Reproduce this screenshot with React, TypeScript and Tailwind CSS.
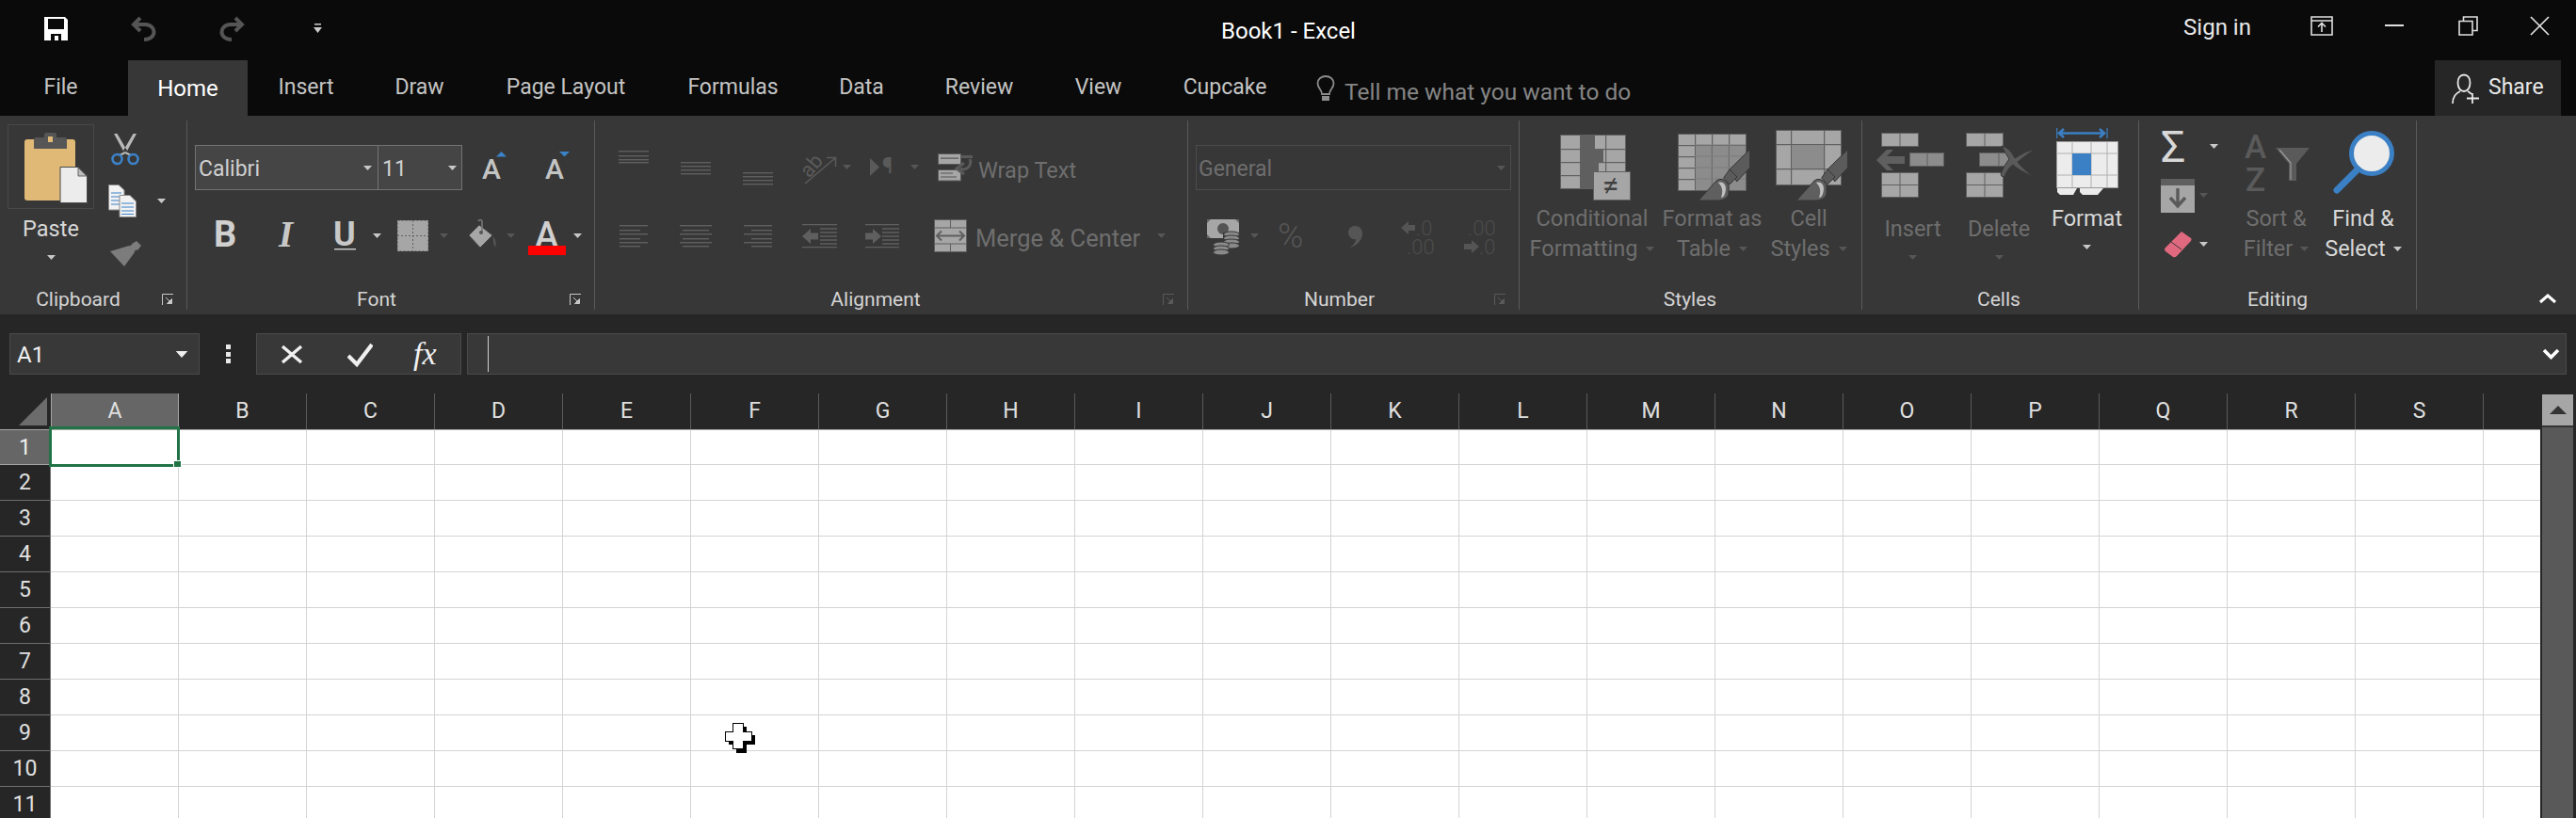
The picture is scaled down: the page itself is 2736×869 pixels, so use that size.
import React from "react";

const D = "#5f5f5f";
const G = "#a6a6a6";

function Caret({ c = "#c8c8c8", className = "" }: { c?: string; className?: string }) {
  return (
    <svg width="9" height="5" viewBox="0 0 9 5" className={"shrink-0 " + className}>
      <path d="M0 0H9L4.5 5Z" fill={c} />
    </svg>
  );
}
const DIM = "#565656";

function Launcher({ c = "#c8c8c8", className = "" }: { c?: string; className?: string }) {
  return (
    <svg width="13" height="13" viewBox="0 0 13 13" className={"shrink-0 " + className}>
      <path d="M.5 12V.5H12" fill="none" stroke={c} />
      <path d="M4 4L9 9M10.5 5.5V10.5H5.5Z" fill={c} stroke={c} />
    </svg>
  );
}

function GroupLabel({ w, text, launcher }: { w: string; text: string; launcher?: React.ReactNode }) {
  return (
    <div className="flex h-[22px] items-center text-[21px] leading-[22px] text-[#d4d4d4]">
      <div className={w + " text-center whitespace-nowrap"}>{text}</div>
      {launcher}
    </div>
  );
}

function Stripes({ w, ys, xs }: { w: number; ys: number[]; xs?: [number, number][] }) {
  const h = Math.max(...ys) + 2;
  return (
    <svg width={w} height={h} className="shrink-0">
      {ys.map((y, i) => (
        <rect key={i} x={xs ? xs[i][0] : 0} y={y} width={xs ? xs[i][1] - xs[i][0] : w} height="1.4" fill={D} />
      ))}
    </svg>
  );
}

function Brush({ x, y }: { x: number; y: number }) {
  return (
    <g transform={`translate(${x} ${y})`}>
      <path d="M76.7 16.7V36L62.7 51 55.3 37.7Z" fill="#5b5b5b" stroke="#363636" />
      <path d="M55 38L63 46 55 54 48.7 47Z" fill="#5b5b5b" stroke="#363636" />
      <path d="M22 71L41 50C46 46 53 50 54 56V64C53 69 47 71 42 71Z" fill="#5f5f5f" stroke="#363636" />
      <path d="M43 52C49 50 53 56 50 64 49 67 47 68 46 68 48 62 48 57 43 52Z" fill="#c0c0c0" />
    </g>
  );
}

function ABlue({ dir }: { dir: "up" | "down" }) {
  return (
    <svg width="25" height="30" viewBox="0 0 25 30" className="shrink-0 overflow-visible">
      <text x="-1" y="29" fontFamily="Roboto, sans-serif" fontSize="30" fontWeight="500" fill="#c4c4c4">A</text>
      {dir === "up" ? <path d="M14 5.5L19.5 0 25 5.5Z" fill="#3b82c8" /> : <path d="M14 0H25L19.5 5.5Z" fill="#3b82c8" />}
    </svg>
  );
}

function WinGrid({ rows, cols, w, h, fill }: { rows: number[]; cols: number[]; w: number; h: number; fill: string }) {
  return (
    <g>
      <rect x=".5" y=".5" width={w} height={h} fill={fill} stroke="#606060" />
      {rows.map((y) => (
        <rect key={"r" + y} x="0" y={y} width={w} height="1.2" fill="#606060" />
      ))}
      {cols.map((x) => (
        <rect key={"c" + x} x={x} y="0" width="1.2" height={h} fill="#606060" />
      ))}
    </g>
  );
}

const colNames = "ABCDEFGHIJKLMNOPQRS".split("");
const rows = [1, 2, 3, 4, 5, 6, 7, 8, 9, 10, 11];
const tabs: [string, string][] = [
  ["Insert", "w-[124px]"],
  ["Draw", "w-[117px]"],
  ["Page Layout", "w-[194px]"],
  ["Formulas", "w-[161px]"],
  ["Data", "w-[112px]"],
  ["Review", "w-[138px]"],
  ["View", "w-[115px]"],
  ["Cupcake", "w-[154px]"],
];

export default function App() {
  return (
    <div className="relative h-[869px] w-[2736px] overflow-hidden bg-[#262626] [font-family:Roboto,sans-serif]">
      {/* Title bar */}
      <div className="flex h-[64px] items-start bg-[#0a0a0a]">
        <svg width="25" height="25" viewBox="0 0 25 25" className="ml-[47px] mt-[18px] shrink-0">
          <path fillRule="evenodd" fill="#fff" d="M0 0H22L25 3V25H0Z M4 2V13H21V2Z M7 18V25H11V20H15V25H18V18Z" />
        </svg>
        <svg width="27" height="27" viewBox="0 0 27 27" className="ml-[67px] mt-[17px] shrink-0">
          <path d="M10 2L3 9L10 16M3 9H15C21 9 24.5 13 24.5 17S21 25 14 25" fill="none" stroke="#555" strokeWidth="4" />
        </svg>
        <svg width="27" height="27" viewBox="0 0 27 27" className="ml-[67px] mt-[17px] shrink-0">
          <path d="M17 2L24 9L17 16M24 9H12C6 9 2.5 13 2.5 17S6 25 13 25" fill="none" stroke="#555" strokeWidth="4" />
        </svg>
        <svg width="9" height="10" viewBox="0 0 9 10" className="ml-[73px] mt-[25px] shrink-0">
          <rect x="1" width="7" height="1.5" fill="#ccc" />
          <path d="M0 4H9L4.5 10Z" fill="#ccc" />
        </svg>
        <div className="ml-[955px] mt-[18px] w-[142px] whitespace-nowrap text-center text-[24px] leading-[30px] text-white">Book1 - Excel</div>
        <div className="ml-auto mt-[14px] w-[74px] whitespace-nowrap text-center text-[24px] leading-[30px] text-[#e8e8e8]">Sign in</div>
        <svg width="24" height="21" viewBox="0 0 24 21" className="ml-[62px] mt-[17px] shrink-0">
          <path d="M1 1H23V20H1ZM1 5H23M12 17V8M8 11.5L12 7.5 16 11.5" fill="none" stroke="#e0e0e0" strokeWidth="1.6" />
        </svg>
        <div className="ml-[55px] mt-[26px] h-[2px] w-[20px] bg-[#e0e0e0]" />
        <svg width="21" height="21" viewBox="0 0 21 21" className="ml-[58px] mt-[17px] shrink-0">
          <path d="M1 5.5H15V20H1ZM5.5 5V1H20V15.5H15.5" fill="none" stroke="#e0e0e0" strokeWidth="1.6" />
        </svg>
        <svg width="21" height="21" viewBox="0 0 21 21" className="ml-[55px] mr-[28px] mt-[17px] shrink-0">
          <path d="M1 1L20 20M20 1L1 20" fill="none" stroke="#e8e8e8" strokeWidth="1.6" />
        </svg>
      </div>

      {/* Tabs */}
      <div className="flex h-[59px] bg-[#0a0a0a] text-[23px] text-[#c4c4c4]">
        <div className="ml-[15px] mr-[22px] flex w-[99px] items-center justify-center">File</div>
        <div className="flex w-[127px] items-center justify-center bg-[#373737] text-[24px] text-white">Home</div>
        {tabs.map(([t, w]) => (
          <div key={t} className={w + " flex items-center justify-center whitespace-nowrap"}>{t}</div>
        ))}
        <svg width="20" height="28" viewBox="0 0 20 28" className="ml-[20px] mt-[16px] shrink-0">
          <path d="M6 20C6 15 1.5 14 1.5 8.5 1.5 4 5.5 1 10 1S18.5 4 18.5 8.5C18.5 14 14 15 14 20Z" fill="none" stroke="#8c8c8c" strokeWidth="1.8" />
          <rect x="6" y="22" width="8" height="5" fill="#8c8c8c" />
        </svg>
        <div className="ml-[10px] mt-[19px] h-[30px] w-[305px] whitespace-nowrap text-[24.5px] leading-[30px] text-[#858585]">Tell me what you want to do</div>
        <div className="ml-[853px] flex h-[59px] w-[134px] items-center bg-[#262626] text-[#e8e8e8]">
          <svg width="30" height="32" viewBox="0 0 30 32" className="ml-[18px] shrink-0">
            <path d="M13 19C9 19 6.5 15 6.5 10S9 1.5 13 1.5 19.5 5 19.5 10 17 19 13 19ZM1 32C1 25 4 21 9 19M17 19C19 20 20 21 21 22M22 21V32M16 26.5H29" fill="none" stroke="#e8e8e8" strokeWidth="1.8" />
          </svg>
          <span className="ml-[9px]">Share</span>
        </div>
      </div>

      {/* Ribbon */}
      <div className="flex h-[211px] bg-[#373737] py-[5px] text-[23.5px] leading-[32px] text-[#d8d8d8]">
        {/* Clipboard */}
        <div className="flex w-[199px] shrink-0 flex-col border-r border-[#5a5a5a]">
          <div className="flex h-[179px]">
            <div className="ml-[8px] flex w-[92px] flex-col items-center">
              <div className="mt-[4px] h-[90px] w-[92px] border border-[#484848]">
                <svg width="68" height="76" viewBox="0 0 68 76" className="ml-[17px] mt-[8px]">
                  <rect x="0" y="7" width="54" height="65" rx="3" fill="#dfb975" />
                  <path d="M10 17V7Q10 5 12 5H21V2Q21 0 23 0H32Q34 0 34 2V5H43Q45 5 45 7V17Z" fill="#565656" />
                  <rect x="25" y="4" width="5" height="6" fill="#dfb975" />
                  <path d="M38 36.5H57L66.5 46V74.5H38Z" fill="#ececec" stroke="#4a4a4a" />
                  <path d="M57 37V46H66Z" fill="#bdbdbd" stroke="#4a4a4a" strokeWidth=".8" />
                </svg>
              </div>
              <div className="mt-[5px]">Paste</div>
              <Caret className="mt-[12px]" />
            </div>
            <div className="flex flex-col">
              <svg width="30" height="34" viewBox="0 0 30 34" className="ml-[18px] mt-[14px]">
                <path d="M3 0L6.5 0 17 18 15 22ZM27 0L23.5 0 13 18 15 22Z" fill="#b8b8b8" />
                <path d="M15 20L9 23M15 20L21 23" stroke="#b8b8b8" strokeWidth="2" />
                <circle cx="6.5" cy="27" r="5" fill="none" stroke="#3b82c8" strokeWidth="2.6" />
                <circle cx="23.5" cy="27" r="5" fill="none" stroke="#3b82c8" strokeWidth="2.6" />
              </svg>
              <div className="ml-[15px] mt-[20px] flex">
                <svg width="30" height="35" viewBox="0 0 30 35" className="shrink-0">
                  <path d="M.5.5H11L17 6V27H.5Z" fill="#f2f2f2" stroke="#8a8a8a" />
                  <path d="M3 9H14M3 13H14M3 17H14M3 21H14" stroke="#3b82c8" strokeWidth="1.2" />
                  <path d="M12 11.5H23L29.5 18V34.5H12Z" fill="#f2f2f2" stroke="#8a8a8a" />
                  <path d="M14 20H27M14 24H27M14 28H27M14 31.5H27" stroke="#3b82c8" strokeWidth="1.2" />
                </svg>
                <Caret className="ml-[22px] mt-[15px]" />
              </div>
              <svg width="33" height="28" viewBox="0 0 33 28" className="ml-[17px] mt-[25px]">
                <path d="M23 3L28 0 33 5 29 10 26 8ZM0 11L20 5 26 12 15 27Z" fill="#7c7c7c" />
                <path d="M20 6L24 3 29 8 25 12Z" fill="#7c7c7c" />
              </svg>
            </div>
          </div>
          <GroupLabel w="w-[166px]" text="Clipboard" launcher={<Launcher className="ml-[6px]" />} />
        </div>

        {/* Font */}
        <div className="flex w-[433px] shrink-0 flex-col border-r border-[#5a5a5a]">
          <div className="h-[179px] pt-[26px]">
            <div className="flex h-[48px]">
              <div className="ml-[8px] flex h-[48px] w-[195px] items-center justify-between border border-[#737373] bg-[#454545] pl-[3px] pr-[6px] text-[#d0d0d0]">
                <span className="pt-[3px] text-[23px]">Calibri</span>
                <Caret />
              </div>
              <div className="flex h-[48px] w-[89px] items-center justify-between border border-l-0 border-[#737373] bg-[#454545] pl-[4px] pr-[5px] text-[#d0d0d0]">
                <span className="pt-[3px] text-[23px]">11</span>
                <Caret />
              </div>
              <div className="ml-[22px] mt-[7px]"><ABlue dir="up" /></div>
              <div className="ml-[42px] mt-[7px]"><ABlue dir="down" /></div>
            </div>
            <div className="mt-[31px] flex h-[38px] items-start text-[#c8c8c8]">
              <svg width="24" height="30" viewBox="0 0 24 30" className="ml-[28px] mt-[1px] shrink-0 overflow-visible">
                <text x="0" y="28" fontFamily="Roboto, sans-serif" fontSize="38" fontWeight="700" fill="#d0d0d0">B</text>
              </svg>
              <svg width="22" height="30" viewBox="0 0 22 30" className="ml-[44px] mt-[1px] shrink-0 overflow-visible">
                <text x="1" y="28" fontFamily="Liberation Serif, serif" fontSize="39" fontStyle="italic" fontWeight="700" fill="#c8c8c8">I</text>
              </svg>
              <svg width="24" height="31" viewBox="0 0 24 31" className="ml-[38px] mt-[2px] shrink-0 overflow-visible">
                <text x="-1" y="26" fontFamily="Roboto, sans-serif" fontSize="36" fontWeight="700" fill="#c8c8c8">U</text>
                <rect x="0" y="29" width="23" height="1.4" fill="#d0d0d0" />
              </svg>
              <Caret className="ml-[17px] mt-[15px]" />
              <svg width="33" height="33" viewBox="0 0 33 33" className="ml-[17px] mt-[1px] shrink-0">
                <rect width="33" height="33" fill={G} />
                <path d="M16.5 0V33M0 16.5H33" stroke="#5f5f5f" strokeWidth="1" strokeDasharray="2 2" />
                <path d="M.5.5H32.5V32.5H.5Z" fill="none" stroke="#7a7a7a" strokeDasharray="2 2" />
              </svg>
              <Caret c={DIM} className="ml-[12px] mt-[15px]" />
              <svg width="31" height="31" viewBox="0 0 31 31" className="ml-[21px] shrink-0">
                <path d="M12 6L26 17 13 30 1 17Z" fill={G} stroke="#4a4a4a" />
                <path d="M11 2Q13-1 15 2V13" fill="none" stroke="#777" strokeWidth="1.6" />
                <circle cx="14" cy="14" r="2" fill="#555" />
                <path d="M27 18Q31 24 29 30 26 25 27 18Z" fill="#555" />
              </svg>
              <Caret c={DIM} className="ml-[10px] mt-[15px]" />
              <svg width="40" height="38" viewBox="0 0 40 38" className="ml-[14px] mt-[2px] shrink-0 overflow-visible">
                <text x="7" y="28" fontFamily="Roboto, sans-serif" fontSize="38" fontWeight="500" fill="#d0d0d0">A</text>
                <rect y="26" width="40" height="10" fill="#ff0000" />
              </svg>
              <Caret className="ml-[8px] mt-[15px]" />
            </div>
          </div>
          <GroupLabel w="w-[402px]" text="Font" launcher={<Launcher className="ml-[4px]" />} />
        </div>

        {/* Alignment */}
        <div className="flex w-[630px] shrink-0 flex-col border-r border-[#5a5a5a] text-[#6e6e6e]">
          <div className="h-[179px] pt-[32px]">
            <div className="flex h-[40px] items-start">
              <div className="ml-[25px]"><Stripes w={32} ys={[0, 5, 9, 12]} /></div>
              <div className="ml-[34px] mt-[12px]"><Stripes w={32} ys={[0, 4, 8, 12]} /></div>
              <div className="ml-[34px] mt-[23px]"><Stripes w={32} ys={[0, 4, 8, 12]} /></div>
              <svg width="38" height="34" viewBox="0 0 38 34" className="ml-[31px] mt-[2px] shrink-0 overflow-visible">
                <text x="0" y="24" transform="rotate(-50 8 18)" fontFamily="Roboto, sans-serif" fontSize="22" fill="#5a5a5a">ab</text>
                <path d="M3 33L35 6M26 5.5H35.5V15" fill="none" stroke="#5a5a5a" strokeWidth="1.6" />
              </svg>
              <Caret c={DIM} className="ml-[5px] mt-[15px]" />
              <svg width="30" height="21" viewBox="0 0 30 21" className="ml-[20px] mt-[7px] shrink-0 overflow-visible">
                <path d="M0 1L10 10.5 0 20Z" fill="#5a5a5a" />
                <text x="13" y="17" fontFamily="Roboto, sans-serif" fontSize="23" fill="#5a5a5a">¶</text>
              </svg>
              <Caret c={DIM} className="ml-[13px] mt-[15px]" />
              <svg width="38" height="30" viewBox="0 0 38 30" className="ml-[20px] mt-[3px] shrink-0">
                <rect x=".5" y=".5" width="24" height="11" fill={G} stroke="#5a5a5a" />
                <rect x="3" y="4.5" width="19" height="1.2" fill="#555" />
                <rect x=".5" y="17.5" width="24" height="11.5" fill={G} stroke="#5a5a5a" />
                <path d="M3 21H16M3 25H20" stroke="#555" strokeWidth="1.2" />
                <path d="M24 3.5H37M34 6C37 13 30 19 24 16M28 10L20 16 28 22" fill="none" stroke="#5a5a5a" strokeWidth="3" />
              </svg>
              <span className="ml-[5px] mt-[5px] whitespace-nowrap">Wrap Text</span>
            </div>
            <div className="mt-[33px] flex h-[38px] items-start">
              <div className="ml-[26px] mt-[6px]"><Stripes w={30} ys={[0, 5, 9, 14, 18, 22]} xs={[[0, 30], [0, 22], [0, 30], [0, 22], [0, 30], [0, 22]]} /></div>
              <div className="ml-[34px] mt-[6px]"><Stripes w={34} ys={[0, 5, 9, 14, 18, 22]} xs={[[0, 34], [3, 31], [0, 34], [3, 31], [0, 34], [3, 31]]} /></div>
              <div className="ml-[34px] mt-[6px]"><Stripes w={30} ys={[0, 5, 9, 14, 18, 22]} xs={[[0, 30], [8, 30], [0, 30], [8, 30], [0, 30], [8, 30]]} /></div>
              <svg width="37" height="26" viewBox="0 0 37 26" className="ml-[32px] mt-[5px] shrink-0">
                <path d="M0 .7H37M0 24.7H37M19 5H37M19 9H37M19 13H37M19 17H37M19 21H37" stroke={D} strokeWidth="1.3" />
                <path d="M0 13L9 5V9.5H17V16.5H9V21Z" fill={D} />
              </svg>
              <svg width="36" height="26" viewBox="0 0 36 26" className="ml-[30px] mt-[5px] shrink-0">
                <path d="M0 .7H36M0 24.7H36M18 5H36M18 9H36M18 13H36M18 17H36M18 21H36" stroke={D} strokeWidth="1.3" />
                <path d="M17 13L8 5V9.5H0V16.5H8V21Z" fill={D} />
              </svg>
              <svg width="35" height="35" viewBox="0 0 35 35" className="ml-[37px] shrink-0">
                <rect x=".5" y=".5" width="34" height="34" fill={G} stroke={D} />
                <rect x="1" y="9" width="33" height="17" fill={G} />
                <path d="M0 9H35M0 26H35M17.5 0V9M17.5 26V35" stroke={D} />
                <path d="M3 17.5H32M8 12.5L3 17.5 8 22.5M27 12.5L32 17.5 27 22.5" fill="none" stroke={D} strokeWidth="2" />
              </svg>
              <span className="ml-[9px] mt-[4px] w-[173px] whitespace-nowrap text-[25.5px]">Merge &amp; Center</span>
              <Caret c={DIM} className="ml-[20px] mt-[15px]" />
            </div>
          </div>
          <GroupLabel w="w-[596px]" text="Alignment" launcher={<Launcher c="#5a5a5a" className="ml-[7px]" />} />
        </div>

        {/* Number */}
        <div className="flex w-[352px] shrink-0 flex-col border-r border-[#5a5a5a] text-[#6e6e6e]">
          <div className="h-[179px] pt-[26px]">
            <div className="ml-[8px] flex h-[48px] w-[335px] items-center justify-between border border-[#4c4c4c] pl-[2px] pr-[5px]">
              <span className="pt-[3px] text-[23px]">General</span>
              <Caret c={DIM} />
            </div>
            <div className="mt-[31px] flex h-[40px] items-start">
              <svg width="35" height="39" viewBox="0 0 35 39" className="ml-[20px] shrink-0">
                <rect width="34" height="20" fill={G} />
                <path d="M0 0H4L0 4ZM34 0H30L34 4ZM0 20H4L0 16ZM34 20H30L34 16Z" fill="#666" />
                <circle cx="17" cy="10" r="6" fill="#555" />
                <path d="M17 14H35V26H17Z" fill="#373737" />
                <ellipse cx="26" cy="16" rx="8.5" ry="3" fill="#8a8a8a" stroke="#373737" />
                <ellipse cx="26" cy="20" rx="8.5" ry="3" fill="#8a8a8a" stroke="#373737" />
                <ellipse cx="26" cy="24" rx="8.5" ry="3" fill="#8a8a8a" stroke="#373737" />
                <ellipse cx="26" cy="28" rx="8.5" ry="3" fill="#8a8a8a" stroke="#373737" />
                <ellipse cx="15" cy="27" rx="8.5" ry="3" fill="#8a8a8a" stroke="#373737" />
                <ellipse cx="15" cy="31" rx="8.5" ry="3" fill="#8a8a8a" stroke="#373737" />
                <ellipse cx="15" cy="35" rx="8.5" ry="3" fill="#8a8a8a" stroke="#373737" />
              </svg>
              <Caret c={DIM} className="ml-[11px] mt-[15px]" />
              <svg width="34" height="32" viewBox="0 0 34 32" className="ml-[21px] mt-[3px] shrink-0 overflow-visible">
                <text x="-1" y="27" fontFamily="Roboto, sans-serif" fontSize="37" fontWeight="300" fill="#555">%</text>
              </svg>
              <svg width="16" height="24" viewBox="0 0 16 24" className="ml-[40px] mt-[7px] shrink-0">
                <path d="M7 0C12 0 15 3 15 8 15 15 9 21 2 23 6 20 8 17 8 14 3 15 0 11 0 7 0 3 3 0 7 0Z" fill="#555" />
              </svg>
              <svg width="36" height="38" viewBox="0 0 36 38" className="ml-[40px] shrink-0 overflow-visible">
                <path d="M0 9L8 2V6H15V12H8V16Z" fill="#555" />
                <text x="16" y="17" fontFamily="Roboto, sans-serif" fontSize="22" fontWeight="300" fill="#4c4c4c">.0</text>
                <text x="6" y="37" fontFamily="Roboto, sans-serif" fontSize="22" fontWeight="300" fill="#4c4c4c">.00</text>
              </svg>
              <svg width="36" height="38" viewBox="0 0 36 38" className="ml-[31px] shrink-0 overflow-visible">
                <text x="4" y="17" fontFamily="Roboto, sans-serif" fontSize="22" fontWeight="300" fill="#4c4c4c">.00</text>
                <path d="M16 29L8 22V26H0V32H8V36Z" fill="#555" />
                <text x="16" y="37" fontFamily="Roboto, sans-serif" fontSize="22" fontWeight="300" fill="#4c4c4c">.0</text>
              </svg>
            </div>
          </div>
          <GroupLabel w="w-[321px]" text="Number" launcher={<Launcher c="#5a5a5a" className="ml-[4px]" />} />
        </div>

        {/* Styles */}
        <div className="flex w-[364px] shrink-0 flex-col border-r border-[#5a5a5a] text-[#6e6e6e]">
          <div className="flex h-[179px]">
            <div className="ml-[8px] flex w-[138px] flex-col items-center">
              <div className="flex h-[85px] items-end">
                <svg width="75" height="70" viewBox="0 0 75 70" className="ml-[7px] overflow-visible">
                  <WinGrid rows={[15, 29, 43]} cols={[21, 48]} w={69} h={57} fill={G} />
                  <rect x="22" y="1" width="15" height="14" fill="#5f5f5f" />
                  <rect x="22" y="16" width="24" height="13" fill="#5f5f5f" />
                  <rect x="22" y="30" width="19" height="13" fill="#5f5f5f" />
                  <rect x="22" y="44" width="14" height="13" fill="#5f5f5f" />
                  <rect x="35.5" y="39.5" width="39" height="30" fill={G} stroke="#606060" />
                  <text x="45" y="65" fontFamily="Roboto, sans-serif" fontSize="32" fill="#404040">≠</text>
                </svg>
              </div>
              <div className="mt-[3px] whitespace-nowrap">Conditional</div>
              <div className="flex items-center whitespace-nowrap">Formatting<Caret c={DIM} className="ml-[9px]" /></div>
            </div>
            <div className="flex w-[117px] flex-col items-center">
              <div className="flex h-[85px] items-end">
                <svg width="77" height="71" viewBox="0 0 77 71" className="ml-[3px]">
                  <WinGrid rows={[12, 24, 36, 48]} cols={[18, 36, 54]} w={72} h={60} fill={G} />
                  <rect x="19" y="13" width="17" height="47" fill="#8c8c8c" />
                  <rect x="37" y="13" width="17" height="47" fill="#8c8c8c" />
                  <rect x="55" y="13" width="17" height="47" fill="#8c8c8c" />
                  <path d="M18 12H72M18 24H72M18 36H72M18 48H72M36 12V60M54 12V60" stroke="#7c7c7c" />
                  <Brush x={0} y={0} />
                </svg>
              </div>
              <div className="mt-[3px] whitespace-nowrap">Format as</div>
              <div className="flex items-center whitespace-nowrap">Table<Caret c={DIM} className="ml-[9px]" /></div>
            </div>
            <div className="flex w-[88px] flex-col items-center">
              <div className="flex h-[85px] items-end">
                <svg width="76" height="75" viewBox="0 0 76 75" className="ml-[5px]">
                  <WinGrid rows={[15, 41]} cols={[16, 51]} w={69} h={58} fill={G} />
                  <rect x="17" y="16" width="34" height="25" fill="#8c8c8c" />
                  <Brush x={0} y={4} />
                </svg>
              </div>
              <div className="mt-[3px] whitespace-nowrap">Cell</div>
              <div className="flex items-center whitespace-nowrap">Styles<Caret c={DIM} className="ml-[9px]" /></div>
            </div>
          </div>
          <GroupLabel w="w-[362px]" text="Styles" />
        </div>

        {/* Cells */}
        <div className="flex w-[294px] shrink-0 flex-col border-r border-[#5a5a5a] text-[#6e6e6e]">
          <div className="flex h-[179px]">
            <div className="ml-[7px] flex w-[93px] flex-col items-center">
              <div className="flex h-[82px] items-end">
                <svg width="72" height="69" viewBox="0 0 72 69" className="mr-[5px]">
                  <rect x="5.5" y=".5" width="39" height="14" fill={G} stroke="#606060" />
                  <path d="M25 0V14" stroke="#606060" />
                  <rect x="35.5" y="21.5" width="36" height="14" fill="#8c8c8c" stroke="#606060" />
                  <path d="M54 21V35" stroke="#606060" />
                  <rect x="5.5" y="42.5" width="39" height="26" fill={G} stroke="#606060" />
                  <path d="M25 42V68M5 55.5H44" stroke="#606060" />
                  <path d="M0 29L11 18H18L11 25H30V33H11L18 40H11Z" fill="#5f5f5f" />
                </svg>
              </div>
              <div className="mt-[17px]">Insert</div>
              <Caret c={DIM} className="mt-[12px]" />
            </div>
            <div className="flex w-[90px] flex-col items-center">
              <div className="flex h-[82px] items-end">
                <svg width="75" height="69" viewBox="0 0 75 69" className="ml-[5px]">
                  <rect x=".5" y=".5" width="39" height="14" fill={G} stroke="#606060" />
                  <path d="M20 0V14" stroke="#606060" />
                  <rect x="14.5" y="21.5" width="34" height="14" fill="#8c8c8c" stroke="#606060" />
                  <path d="M35 21V35" stroke="#606060" />
                  <rect x=".5" y="42.5" width="39" height="26" fill={G} stroke="#606060" />
                  <path d="M20 42V68M0 55.5H39" stroke="#606060" />
                  <path d="M38 14Q46 15 52 27 62 20 74 17 62 25 55 31 60 38 72 47 56 40 50 34 44 38 41 47 37 47 37 44 40 35 46 28 41 20 38 14Z" fill="#5a5a5a" stroke="#373737" />
                </svg>
              </div>
              <div className="mt-[17px]">Delete</div>
              <Caret c={DIM} className="mt-[12px]" />
            </div>
            <div className="flex w-[97px] flex-col items-center">
              <div className="flex h-[80px] items-end">
                <svg width="66" height="72" viewBox="0 0 66 72">
                  <rect x=".5" y="14.5" width="65" height="49" fill="#ececec" stroke="#9a9a9a" />
                  <path d="M17 14V63M37 14V63M54 14V63M0 27H66M0 50H66" stroke="#b0b0b0" />
                  <rect x="17" y="27" width="20" height="23" fill="#3b7fc4" />
                  <path d="M1 64H22L18 71H4L1 68ZM25 64H50L44 71H28L25 68Z" fill="#ececec" />
                  <path d="M.7 0V11M54 0V11" stroke="#3b7fc4" strokeWidth="1.2" />
                  <path d="M3 5.5H51M8 1L3 5.5 8 10M46 1L51 5.5 46 10" fill="none" stroke="#3b7fc4" strokeWidth="2.6" />
                </svg>
              </div>
              <div className="mt-[8px] text-[#d8d8d8]">Format</div>
              <Caret className="mt-[12px]" />
            </div>
          </div>
          <GroupLabel w="w-[290px]" text="Cells" />
        </div>

        {/* Editing */}
        <div className="flex w-[295px] shrink-0 flex-col border-r border-[#5a5a5a]">
          <div className="flex h-[179px]">
            <div className="flex w-[108px] flex-col">
              <div className="ml-[23px] mt-[12px] flex h-[32px]">
                <svg width="29" height="32" viewBox="0 0 29 32" className="shrink-0 overflow-visible">
                  <text x="0" y="32" fontFamily="Roboto, sans-serif" fontSize="46" fontWeight="400" fill="#d8d8d8">Σ</text>
                </svg>
                <Caret className="ml-[23px] mt-[13px]" />
              </div>
              <div className="ml-[23px] mt-[18px] flex h-[36px]">
                <svg width="36" height="36" viewBox="0 0 36 36" className="shrink-0">
                  <rect width="36" height="36" fill={G} />
                  <rect width="36" height="7" fill="#5f5f5f" />
                  <path d="M18 10V27M10 20L18 29 26 20" fill="none" stroke="#5a5a5a" strokeWidth="3.4" />
                </svg>
                <Caret c={DIM} className="ml-[5px] mt-[15px]" />
              </div>
              <div className="ml-[26px] mt-[20px] flex h-[28px]">
                <svg width="30" height="28" viewBox="0 0 30 28" className="shrink-0">
                  <path d="M19 0L29 7Q30 8 29 10L14 26Q12 28 10 27L2 21Q0 19 2 17Z" fill="#e0697f" />
                  <path d="M8 11L19 19" stroke="#373737" strokeWidth="1" />
                </svg>
                <Caret className="ml-[8px] mt-[11px]" />
              </div>
            </div>
            <div className="flex w-[75px] flex-col items-center text-[#6e6e6e]">
              <div className="flex h-[76px] items-end">
                <svg width="68" height="62" viewBox="0 0 68 62" className="ml-[2px] overflow-visible">
                  <text x="-1" y="26" fontFamily="Roboto, sans-serif" fontSize="35" fontWeight="500" fill="#5a5a5a">A</text>
                  <text x="0" y="61" fontFamily="Roboto, sans-serif" fontSize="35" fontWeight="500" fill="#5a5a5a">Z</text>
                  <path d="M32 15H68L54 32V50H46V32Z" fill="#5a5a5a" />
                  <path d="M36 17L48 31V49" fill="none" stroke="#999" strokeWidth="1.2" />
                </svg>
              </div>
              <div className="mt-[12px] whitespace-nowrap">Sort &amp;</div>
              <div className="flex items-center whitespace-nowrap">Filter<Caret c={DIM} className="ml-[8px]" /></div>
            </div>
            <div className="flex w-[110px] flex-col items-center">
              <div className="flex h-[78px] items-end">
                <svg width="67" height="67" viewBox="0 0 67 67">
                  <ellipse cx="42" cy="24" rx="21.5" ry="21.5" fill="#ececec" stroke="#3b7fc4" strokeWidth="5" />
                  <path d="M27 41L5 63" stroke="#3b7fc4" strokeWidth="7" strokeLinecap="round" />
                </svg>
              </div>
              <div className="mt-[10px] whitespace-nowrap">Find &amp;</div>
              <div className="flex items-center whitespace-nowrap">Select<Caret className="ml-[8px]" /></div>
            </div>
          </div>
          <GroupLabel w="w-[296px]" text="Editing" />
        </div>

        <div className="flex-1 flex flex-col justify-end">
          <svg width="18" height="11" viewBox="0 0 18 11" className="mb-[6px] ml-[130px]">
            <path d="M1 9L9 2 17 9" fill="none" stroke="#fff" strokeWidth="3" />
          </svg>
        </div>
      </div>

      {/* Formula bar */}
      <div className="flex h-[84px] items-start bg-[#262626] pt-[20px]">
        <div className="ml-[10px] flex h-[44px] w-[202px] items-center justify-between border border-[#4a4a4a] bg-[#383838] pl-[7px] pr-[11px] text-[24px] text-[#f0f0f0]">
          <span className="pt-[1px]">A1</span>
          <Caret c="#f0f0f0" className="h-[7px] w-[14px]" />
        </div>
        <div className="ml-[28px] mt-[12px] flex h-[20px] w-[5px] flex-col justify-between">
          <div className="h-[5px] w-[5px] bg-[#e8e8e8]" />
          <div className="h-[5px] w-[5px] bg-[#e8e8e8]" />
          <div className="h-[5px] w-[5px] bg-[#e8e8e8]" />
        </div>
        <div className="ml-[27px] flex h-[44px] w-[218px] items-center border border-[#4a4a4a] bg-[#383838]">
          <svg width="24" height="21" viewBox="0 0 24 21" className="ml-[25px] shrink-0">
            <path d="M2 2L22 19M22 2L2 19" stroke="#f0f0f0" strokeWidth="3.4" />
          </svg>
          <svg width="27" height="27" viewBox="0 0 27 27" className="ml-[47px] shrink-0">
            <path d="M1 15L10 24 26 3" fill="none" stroke="#f0f0f0" strokeWidth="4.2" />
          </svg>
          <span className="ml-[43px] whitespace-nowrap [font-family:'Liberation_Serif',serif] text-[34px] italic leading-[30px] text-[#f0f0f0]">fx</span>
        </div>
        <div className="ml-[6px] flex h-[44px] w-[2230px] items-center border border-[#4a4a4a] bg-[#383838]">
          <div className="ml-[21px] h-[38px] w-[1px] bg-[#d0d0d0]" />
          <svg width="19" height="12" viewBox="0 0 19 12" className="ml-[2181px] shrink-0">
            <path d="M2 2L9.5 9.5 17 2" fill="none" stroke="#fff" strokeWidth="3.6" />
          </svg>
        </div>
      </div>

      {/* Sheet */}
      <div className="flex">
        <div className="w-[2698px] shrink-0">
          <div className="flex h-[38px] bg-[#262626] text-[23px] text-[#e0e0e0]">
            <div className="flex w-[54px] shrink-0 items-end justify-end pb-[4px] pr-[4px]">
              <svg width="30" height="30" viewBox="0 0 30 30"><path d="M30 0V30H0Z" fill="#6c6c6c" /></svg>
            </div>
            {colNames.map((c, i) => (
              <div
                key={c}
                className={
                  i === 0
                    ? "flex w-[136px] shrink-0 items-center justify-center border-x border-[#a6a6a6] bg-[#666666]"
                    : "flex w-[136px] shrink-0 items-center justify-center border-r border-[#5a5a5a]"
                }
              >
                {c}
              </div>
            ))}
            <div className="flex-1" />
          </div>
          {rows.map((r, ri) => (
            <div key={r} className={ri === 0 ? "flex h-[38px] border-t border-[#a6a6a6]" : "flex h-[38px]"}>
              <div
                className={
                  ri === 0
                    ? "flex w-[54px] shrink-0 items-center justify-center border-b border-r border-[#a6a6a6] bg-[#666666] pt-[2px] text-[23px] text-[#f0f0f0]"
                    : "flex w-[54px] shrink-0 items-center justify-center border-b border-r border-[#6e6e6e] bg-[#262626] pt-[2px] text-[23px] text-[#e0e0e0]"
                }
              >
                {r}
              </div>
              {colNames.map((c) => (
                <div key={c} className="w-[136px] shrink-0 border-b border-r border-[#d4d4d4] bg-white" />
              ))}
              <div className="flex-1 border-b border-[#d4d4d4] bg-white" />
            </div>
          ))}
        </div>
        <div className="ml-[2px] mt-[1px] w-[33px] shrink-0 bg-[#595959]">
          <div className="flex h-[35px] items-center justify-center border-b-[2px] border-[#333333] bg-[#a6a6a6]">
            <svg width="18" height="9" viewBox="0 0 18 9"><path d="M9 0L18 9H0Z" fill="#333" /></svg>
          </div>
        </div>
      </div>

      {/* Selected cell */}
      <div className="absolute left-[52px] top-[453px] h-[43px] w-[139px] border-[3px] border-[#217346]" />
      <div className="absolute left-[184px] top-[489px] h-[8px] w-[9px] border border-white bg-[#217346]" />

      {/* Mouse cursor */}
      <svg width="34" height="34" viewBox="0 0 34 34" className="absolute left-[769px] top-[767px]" shapeRendering="crispEdges">
        <path d="M13 5H24V14H33V24H24V33H13V24H5V14H13Z" fill="#000" />
        <path d="M9.5 1.5H20.5V10.5H29.5V20.5H20.5V28.5H9.5V20.5H1.5V10.5H9.5Z" fill="#fff" stroke="#000" strokeWidth="1.6" />
      </svg>
    </div>
  );
}
